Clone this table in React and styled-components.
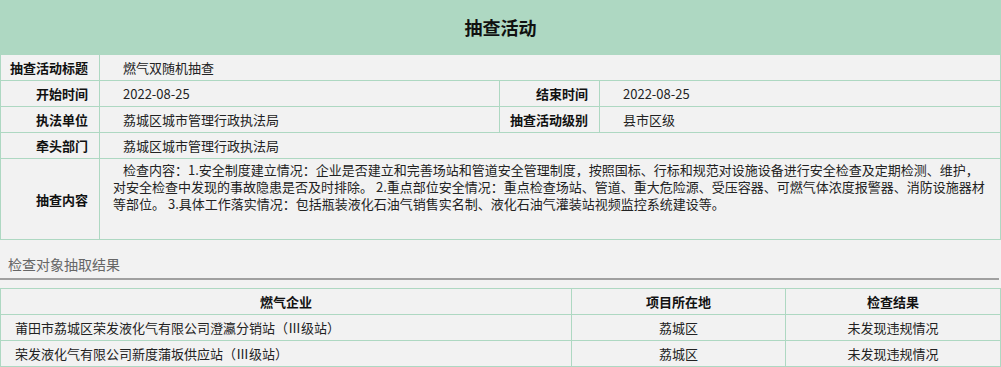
import styled, { createGlobalStyle } from "styled-components";

const GlobalStyle = createGlobalStyle`
  html, body {
    margin: 0;
    padding: 0;
    background: #f2f2f2;
  }
  body {
    font-family: "Noto Sans CJK SC", "Noto Sans", sans-serif;
    font-size: 13px;
    color: #222;
  }
`;

const Page = styled.div`
  width: 1001px;
  background: #f2f2f2;
`;

const Banner = styled.div`
  height: 54px;
  background: #aed8c2;
  display: flex;
  align-items: center;
  justify-content: center;
  font-size: 18px;
  font-weight: bold;
  color: #111;
`;

const InfoTable = styled.table`
  width: 1000px;
  border-collapse: collapse;
  table-layout: fixed;
`;

const Label = styled.td`
  width: 99px;
  box-sizing: border-box;
  border: 1px solid #aed8c2;
  text-align: right;
  padding: 0 11px 0 0;
  font-weight: bold;
  color: #111;
  height: ${(p) => p.h || 26}px;
  line-height: 17px;
  vertical-align: middle;
`;

const Value = styled.td`
  box-sizing: border-box;
  border: 1px solid #aed8c2;
  padding: 0 10px 0 13px;
  text-indent: 10px;
  color: #222;
  line-height: 17px;
  vertical-align: ${(p) => (p.top ? "top" : "middle")};
  padding-top: ${(p) => (p.top ? "2px" : "0")};
`;

const SectionTitle = styled.div`
  height: 40px;
  padding: 15px 0 0 8px;
  box-sizing: border-box;
  color: #666;
  font-size: 14px;
  line-height: 19px;
  border-bottom: 2px solid #a0a0a0;
  width: 999px;
  margin-bottom: 8px;
`;

const ResultTable = styled.table`
  width: 1000px;
  border-collapse: collapse;
  table-layout: fixed;
`;

const Head = styled.th`
  border: 1px solid #aed8c2;
  height: 25px;
  font-weight: bold;
  color: #111;
  text-align: center;
  padding: 0;
  line-height: 17px;
`;

const Cell = styled.td`
  border: 1px solid #aed8c2;
  height: 25px;
  padding: 0 0 0 ${(p) => (p.left ? "14px" : "0")};
  text-align: ${(p) => (p.left ? "left" : "center")};
  color: #222;
  line-height: 17px;
`;

const content =
  "检查内容：1.安全制度建立情况：企业是否建立和完善场站和管道安全管理制度，按照国标、行标和规范对设施设备进行安全检查及定期检测、维护，对安全检查中发现的事故隐患是否及时排除。 2.重点部位安全情况：重点检查场站、管道、重大危险源、受压容器、可燃气体浓度报警器、消防设施器材等部位。 3.具体工作落实情况：包括瓶装液化石油气销售实名制、液化石油气灌装站视频监控系统建设等。";

const results = [
  ["莆田市荔城区荣发液化气有限公司澄瀛分销站（Ⅲ级站）", "荔城区", "未发现违规情况"],
  ["荣发液化气有限公司新度蒲坂供应站（Ⅲ级站）", "荔城区", "未发现违规情况"],
];

export default function App() {
  return (
    <Page>
      <GlobalStyle />
      <Banner>抽查活动</Banner>
      <InfoTable>
        <colgroup>
          <col style={{ width: 99 }} />
          <col style={{ width: 400 }} />
          <col style={{ width: 100 }} />
          <col style={{ width: 401 }} />
        </colgroup>
        <tbody>
          <tr>
            <Label>抽查活动标题</Label>
            <Value colSpan={3}>燃气双随机抽查</Value>
          </tr>
          <tr>
            <Label>开始时间</Label>
            <Value>2022-08-25</Value>
            <Label>结束时间</Label>
            <Value>2022-08-25</Value>
          </tr>
          <tr>
            <Label>执法单位</Label>
            <Value>荔城区城市管理行政执法局</Value>
            <Label>抽查活动级别</Label>
            <Value>县市区级</Value>
          </tr>
          <tr>
            <Label>牵头部门</Label>
            <Value colSpan={3}>荔城区城市管理行政执法局</Value>
          </tr>
          <tr>
            <Label h={81}>抽查内容</Label>
            <Value colSpan={3} top>
              {content}
            </Value>
          </tr>
        </tbody>
      </InfoTable>
      <SectionTitle>检查对象抽取结果</SectionTitle>
      <ResultTable>
        <colgroup>
          <col style={{ width: 571 }} />
          <col style={{ width: 214 }} />
          <col style={{ width: 215 }} />
        </colgroup>
        <thead>
          <tr>
            <Head>燃气企业</Head>
            <Head>项目所在地</Head>
            <Head>检查结果</Head>
          </tr>
        </thead>
        <tbody>
          {results.map((r) => (
            <tr key={r[0]}>
              <Cell left>{r[0]}</Cell>
              <Cell>{r[1]}</Cell>
              <Cell>{r[2]}</Cell>
            </tr>
          ))}
        </tbody>
      </ResultTable>
    </Page>
  );
}
